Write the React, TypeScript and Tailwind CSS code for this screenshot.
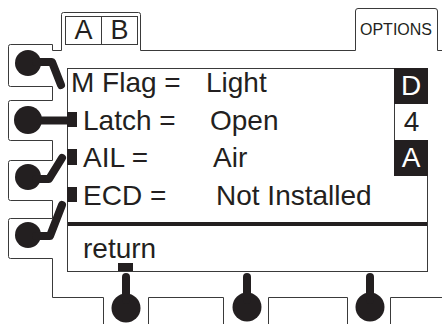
import type { ReactNode } from 'react'

const ink = '#231f20'
const line = '#3a3a3a'

type Row = { label: string; value: string; pad: string; labelW: string }

const rows: Row[] = [
  { label: 'M Flag =', value: 'Light', pad: 'pl-[3px]', labelW: 'w-[135px]' },
  { label: 'Latch =', value: 'Open', pad: 'pl-[15px]', labelW: 'w-[127px]' },
  { label: 'AIL =', value: 'Air', pad: 'pl-[15px]', labelW: 'w-[130px]' },
  { label: 'ECD =', value: 'Not Installed', pad: 'pl-[15px]', labelW: 'w-[133px]' },
]

function Indicator({ dark, children }: { dark?: boolean; children: ReactNode }) {
  return (
    <div
      className={
        dark
          ? 'flex h-[36px] items-center justify-center bg-[#231f20] text-[28px] leading-none text-white'
          : 'flex h-[36px] items-center justify-center border-l border-[#3a3a3a] bg-white text-[28px] leading-none text-[#231f20]'
      }
    >
      {children}
    </div>
  )
}

function Bezel() {
  // outline of the bezel and the soft keys with their pointers
  const outline =
    'M442 50.5 H437.5 V11 Q437.5 8.5 435 8.5 H358 Q355.5 8.5 355.5 11 V50.5 H140.5 V14.5 Q140.5 12.5 138.5 12.5 H63.5 Q61.5 12.5 61.5 14.5 V50.5 H52.5 V44.5 H10.5 Q8.5 44.5 8.5 46.5 V84.5 Q8.5 86.5 10.5 86.5 H52.5 V100.5 H10.5 Q8.5 100.5 8.5 102.5 V138.5 Q8.5 140.5 10.5 140.5 H52.5 V160.5 H10.5 Q8.5 160.5 8.5 162.5 V198.5 Q8.5 200.5 10.5 200.5 H52.5 V218.5 H10.5 Q8.5 218.5 8.5 220.5 V256.5 Q8.5 258.5 10.5 258.5 H52.5 V297.5 H103.5 V324 M148.5 324 V297.5 H223.5 V324 M268.5 324 V297.5 H347.5 V324 M390.5 324 V297.5 H442'
  return (
    <svg className="pointer-events-none absolute inset-0" width="442" height="324" viewBox="0 0 442 324">
      <path d={outline} fill="none" stroke={line} strokeWidth="1" />
      <g fill={ink}>
        <circle cx="28" cy="63" r="13" />
        <circle cx="28" cy="120" r="14" />
        <circle cx="28" cy="177" r="13" />
        <circle cx="28" cy="235" r="13" />
        <circle cx="126" cy="308" r="14.5" />
        <circle cx="247" cy="307" r="14.5" />
        <circle cx="370" cy="307" r="14.5" />
        <rect x="67" y="112" width="10" height="15" />
        <rect x="67" y="149" width="10" height="16" />
        <rect x="67" y="187" width="10" height="15" />
        <rect x="118" y="263" width="15" height="8" />
      </g>
      <g fill="none" stroke={ink} strokeWidth="8" strokeLinecap="round" strokeLinejoin="round">
        <polyline points="36,62 52,62 61,85" />
        <polyline points="36,179 49,179 62,158" />
        <polyline points="36,236 50,236 62,205" />
        <line x1="126" y1="277" x2="126" y2="300" />
        <line x1="247" y1="277" x2="247" y2="300" />
        <line x1="370" y1="277" x2="370" y2="300" />
      </g>
      <line x1="36" y1="120.5" x2="67" y2="120.5" stroke={ink} strokeWidth="8" />
    </svg>
  )
}

export default function App() {
  return (
    <div className="relative h-[324px] w-[442px] overflow-hidden bg-white font-['Liberation_Sans',Arial,sans-serif] text-[#231f20]">
      <div className="relative flex h-[68px] items-start">
        <div className="ml-[65px] mt-[16px] flex h-[29px] w-[73px] border border-[#3a3a3a] text-[27px] leading-none">
          <span className="flex flex-1 items-center justify-center border-r border-[#3a3a3a]">A</span>
          <span className="flex flex-1 items-center justify-center">B</span>
        </div>
        <div className="ml-auto mr-[5px] mt-[20px] w-[82px] text-center text-[16px] leading-[20px]">OPTIONS</div>
      </div>

      <div className="relative ml-[67px] flex h-[204px] w-[361px] flex-col border border-[#3a3a3a]">
        <div className="flex h-[153px]">
          <div className="flex flex-1 flex-col text-[28px] leading-[28px]">
            {rows.map((r) => (
              <div className={`flex h-[37.5px] items-start ${r.pad}`} key={r.label}>
                <span className={`${r.labelW} whitespace-nowrap`}>{r.label}</span>
                <span className="whitespace-nowrap">{r.value}</span>
              </div>
            ))}
          </div>
          <div className="-mr-px -mt-px w-[34px]">
            <Indicator dark>D</Indicator>
            <Indicator>4</Indicator>
            <Indicator dark>A</Indicator>
          </div>
        </div>
        <div className="h-[4px] bg-[#231f20]" />
        <div className="pl-[15px] pt-[9px] text-[28px] leading-[28px]">return</div>
      </div>

      <Bezel />
    </div>
  )
}
